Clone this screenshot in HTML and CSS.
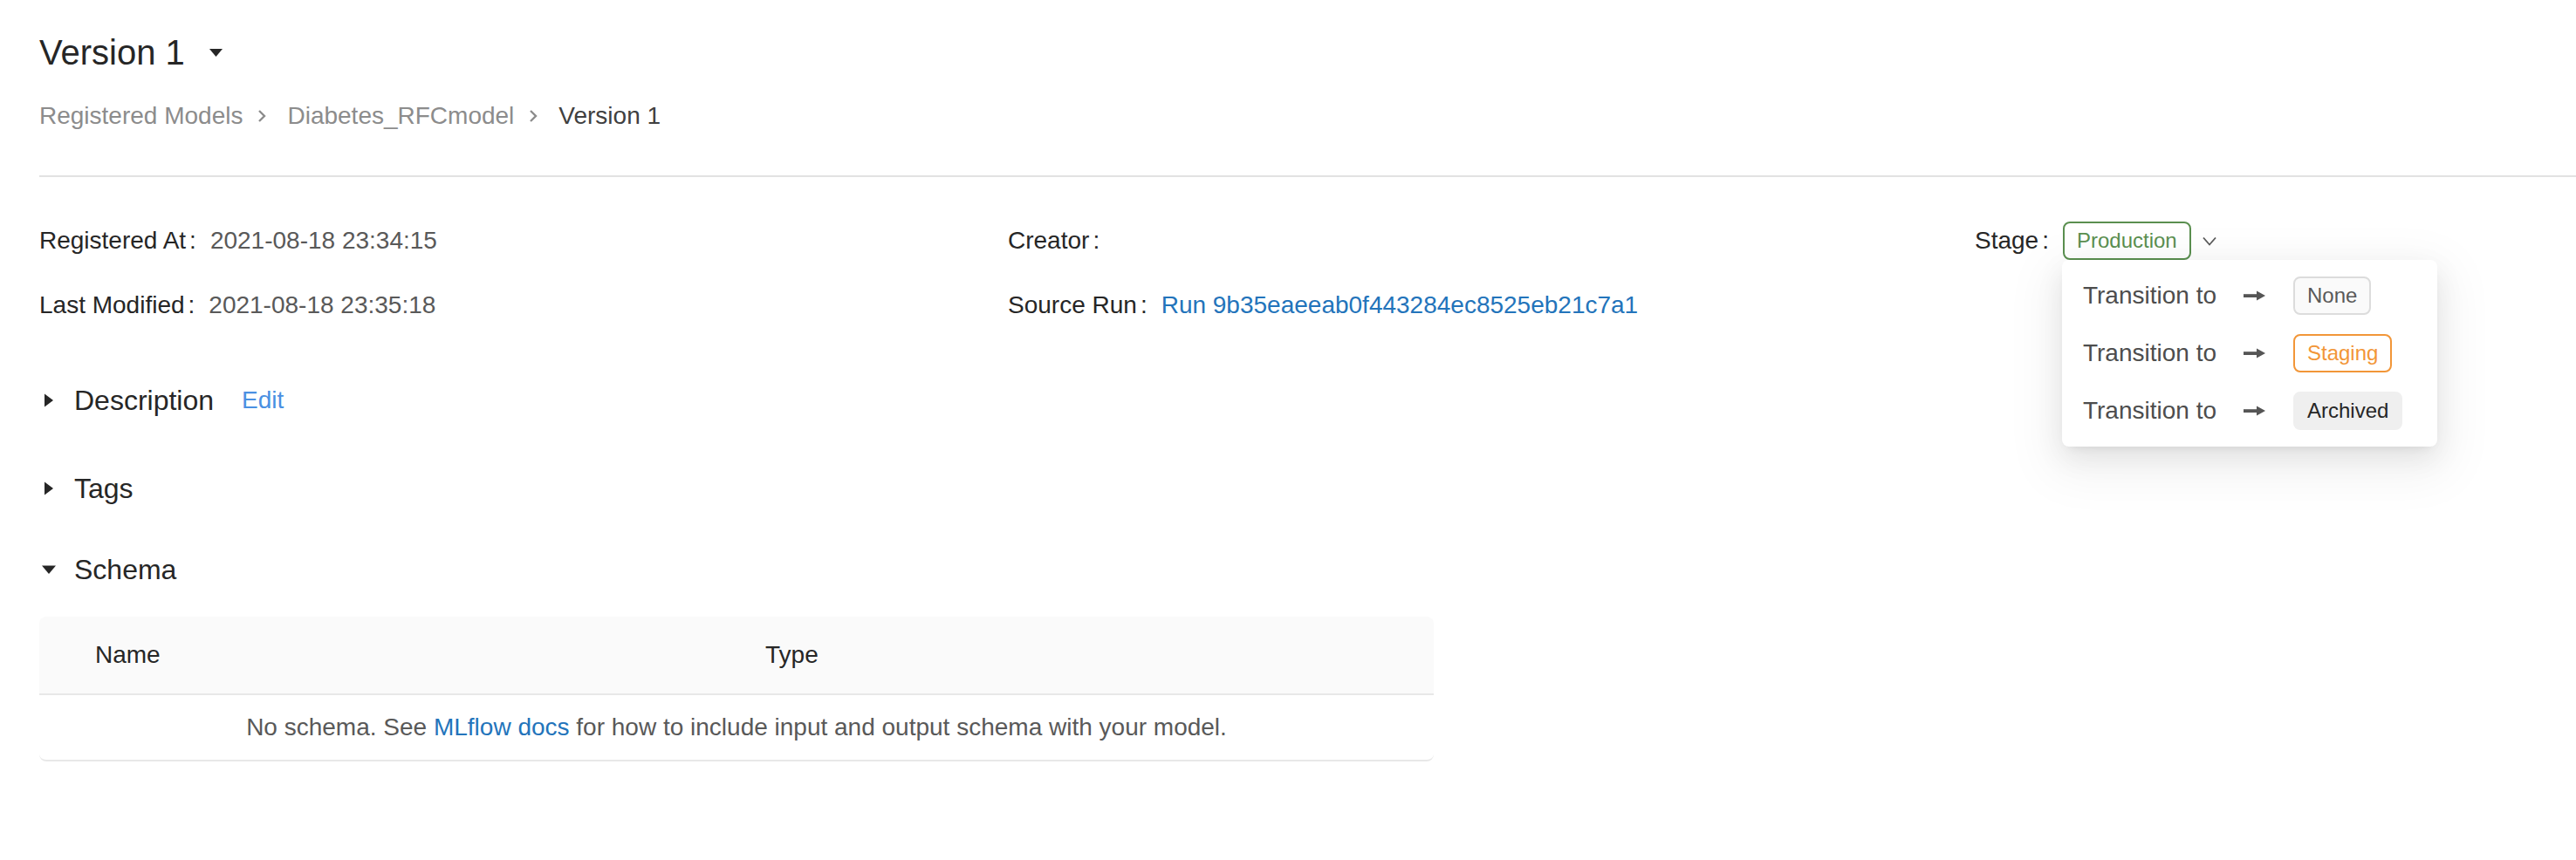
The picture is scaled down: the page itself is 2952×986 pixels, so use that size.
FILE: index.html
```html
<!DOCTYPE html>
<html lang="en">
<head>
<meta charset="utf-8">
<title>Version 1 - Diabetes_RFCmodel</title>
<link rel="stylesheet" href="styles.css">
</head>
<body>
<div class="page">
  <header class="head">
    <h1 class="title"><span>Version 1</span>
      <svg class="title-caret" viewBox="0 0 15 10" aria-hidden="true"><path d="M0 1H15L7.5 10Z" fill="#262626"/></svg>
    </h1>
    <nav class="crumbs">
      <a class="crumb" href="#">Registered Models</a>
      <svg class="sep" viewBox="0 0 20 20" aria-hidden="true"><polyline points="7,4 13,10 7,16" fill="none" stroke="#8c8c8c" stroke-width="2.4"/></svg>
      <a class="crumb" href="#">Diabetes_RFCmodel</a>
      <svg class="sep" viewBox="0 0 20 20" aria-hidden="true"><polyline points="7,4 13,10 7,16" fill="none" stroke="#8c8c8c" stroke-width="2.4"/></svg>
      <span class="crumb current">Version 1</span>
    </nav>
  </header>
  <hr class="divider">

  <div class="meta">
    <div class="item"><span class="label">Registered At</span><span class="value">2021-08-18 23:34:15</span></div>
    <div class="item"><span class="label">Creator</span><span class="value"></span></div>
    <div class="item">
      <span class="label">Stage</span>
      <span class="stage">
        <span class="tag tag-prod">Production</span>
        <svg class="stage-chevron" viewBox="0 0 16 11" aria-hidden="true"><polyline points="1,1.5 8,9.5 15,1.5" fill="none" stroke="#595959" stroke-width="1.8"/></svg>
        <div class="menu">
          <div class="menu-item">
            <span class="m-text">Transition to</span>
            <svg class="m-arrow" viewBox="0 0 25 12" aria-hidden="true"><rect x="0" y="4.2" width="17" height="3.8" fill="#555"/><path d="M15 0.5L25 6L15 11.5Z" fill="#555"/></svg>
            <span class="tag tag-none">None</span>
          </div>
          <div class="menu-item">
            <span class="m-text">Transition to</span>
            <svg class="m-arrow" viewBox="0 0 25 12" aria-hidden="true"><rect x="0" y="4.2" width="17" height="3.8" fill="#555"/><path d="M15 0.5L25 6L15 11.5Z" fill="#555"/></svg>
            <span class="tag tag-staging">Staging</span>
          </div>
          <div class="menu-item">
            <span class="m-text">Transition to</span>
            <svg class="m-arrow" viewBox="0 0 25 12" aria-hidden="true"><rect x="0" y="4.2" width="17" height="3.8" fill="#555"/><path d="M15 0.5L25 6L15 11.5Z" fill="#555"/></svg>
            <span class="tag tag-archived">Archived</span>
          </div>
        </div>
      </span>
    </div>
    <div class="item"><span class="label">Last Modified</span><span class="value">2021-08-18 23:35:18</span></div>
    <div class="item"><span class="label">Source Run</span><a class="link" href="#">Run 9b35eaeeab0f443284ec8525eb21c7a1</a></div>
    <div class="item"></div>
  </div>

  <section class="sec sec-desc">
    <div class="sec-head">
      <svg class="tri" viewBox="0 0 16 16" aria-hidden="true"><path d="M3 0.5L13 8L3 15.5Z" fill="#262626"/></svg>
      <span class="sec-title">Description</span>
      <a class="edit" href="#">Edit</a>
    </div>
  </section>

  <section class="sec sec-tags">
    <div class="sec-head">
      <svg class="tri" viewBox="0 0 16 16" aria-hidden="true"><path d="M3 0.5L13 8L3 15.5Z" fill="#262626"/></svg>
      <span class="sec-title">Tags</span>
    </div>
  </section>

  <section class="sec sec-schema">
    <div class="sec-head">
      <svg class="tri" viewBox="0 0 16 16" aria-hidden="true"><path d="M0 3.5H16L8 13Z" fill="#262626"/></svg>
      <span class="sec-title">Schema</span>
    </div>
    <table class="schema">
      <colgroup><col class="c-name"><col class="c-type"></colgroup>
      <thead>
        <tr><th class="th-name">Name</th><th class="th-type">Type</th></tr>
      </thead>
      <tbody>
        <tr><td class="empty" colspan="2">No schema. See <a class="link" href="#">MLflow docs</a> for how to include input and output schema with your model.</td></tr>
      </tbody>
    </table>
  </section>
</div>
</body>
</html>
```

FILE: styles.css
```css
* { box-sizing: border-box; }
html, body { margin: 0; background: #fff; }
body {
  font-family: "Liberation Sans", Arial, Helvetica, sans-serif;
  color: #262626;
}
.page { padding: 32px 0 0 45px; }

.title {
  margin: 0;
  display: flex;
  align-items: center;
  font-size: 40px;
  font-weight: 400;
  line-height: 56px;
  color: #262626;
}
.title-caret { width: 15px; height: 10px; margin-left: 28px; }

.crumbs {
  margin-top: 23px;
  display: flex;
  align-items: center;
  font-size: 28px;
  line-height: 44px;
}
.crumb { color: #8c8c8c; text-decoration: none; }
.crumb.current { color: #404040; }
.sep { width: 20px; height: 20px; margin: 0 19px 0 12px; }

.divider {
  margin: 46px 0 0 0;
  border: 0;
  height: 2px;
  background: #e2e2e2;
}

.meta {
  margin-top: 51px;
  display: grid;
  grid-template-columns: 1110px 1108px 1fr;
  row-gap: 30px;
  font-size: 28px;
  line-height: 44px;
}
.item { display: flex; align-items: center; height: 44px; }
.label { color: #262626; white-space: nowrap; }
.label::after { content: ":"; margin: 0 16px 0 4px; }
.value { color: #595959; }
.link { color: #2374bb; text-decoration: none; }

.stage { position: relative; display: flex; align-items: center; }
.stage-chevron { width: 16px; height: 11px; margin-left: 13px; }

.tag {
  display: inline-block;
  font-size: 24px;
  line-height: 40px;
  padding: 0 14px;
  border: 2px solid;
  border-radius: 8px;
  white-space: nowrap;
}
.tag-prod { color: #5a8f4f; border-color: #5a8f4f; background: #fff; }
.tag-none { color: #595959; border-color: #dcdcdc; background: #fafafa; }
.tag-staging { color: #f29638; border-color: #f29638; background: #fff; }
.tag-archived { color: #262626; border-color: #efefef; background: #efefef; }

.menu {
  position: absolute;
  top: 44px;
  left: -1px;
  width: 430px;
  padding: 8px 0;
  background: #fff;
  border-radius: 8px;
  box-shadow: 0 6px 12px -8px rgba(0,0,0,.12), 0 12px 32px 0 rgba(0,0,0,.08), 0 18px 56px 16px rgba(0,0,0,.05);
  z-index: 10;
}
.menu-item {
  display: flex;
  align-items: center;
  height: 66px;
  padding-left: 24px;
  font-size: 28px;
  line-height: 44px;
  color: #4d4d4d;
}
.m-text { width: 184px; white-space: nowrap; }
.m-arrow { width: 25px; height: 12px; margin-right: 32px; }

.sec-head {
  display: flex;
  align-items: center;
  height: 48px;
  padding-left: 3px;
  font-size: 32px;
  line-height: 48px;
}
.tri { width: 16px; height: 16px; margin-right: 21px; }
.sec-title { color: #262626; }
.edit { margin-left: 32px; font-size: 28px; color: #4a90e2; text-decoration: none; }

.sec-desc { margin-top: 63px; }
.sec-tags { margin-top: 53px; }
.sec-schema { margin-top: 45px; }

.schema {
  margin-top: 30px;
  width: 1598px;
  table-layout: fixed;
  border-collapse: separate;
  border-spacing: 0;
  font-size: 28px;
  line-height: 44px;
}
.c-name { width: 800px; }
.schema th {
  padding: 22px 0;
  text-align: left;
  font-weight: 400;
  color: #262626;
  background: #fafafa;
  border-bottom: 2px solid #e8e8e8;
}
.schema .th-name { padding-left: 64px; border-top-left-radius: 8px; }
.schema .th-type { padding-left: 32px; border-top-right-radius: 8px; }
.schema td {
  padding: 15px 0;
  text-align: center;
  color: #595959;
  border-bottom: 2px solid #e8e8e8;
  border-bottom-left-radius: 8px;
  border-bottom-right-radius: 8px;
}
```
